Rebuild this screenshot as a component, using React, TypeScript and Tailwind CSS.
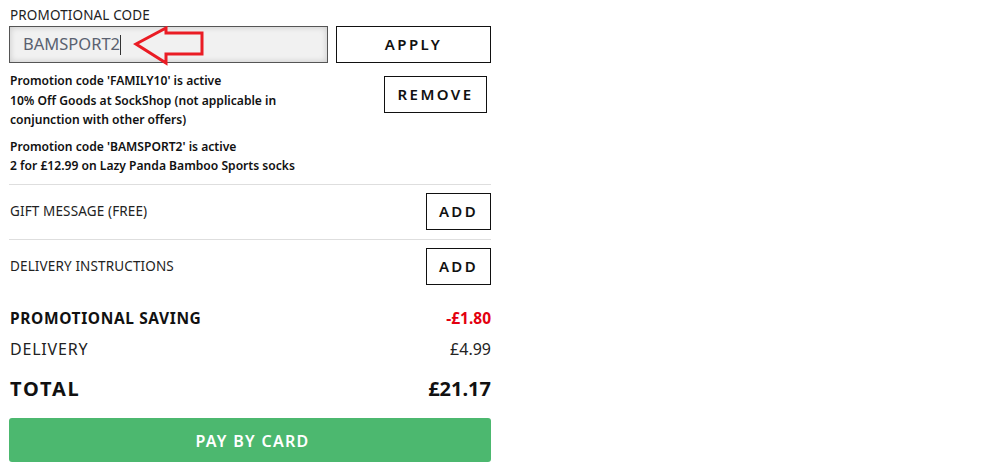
import React from "react"

const FONT = "font-['Noto_Sans',sans-serif]"

function OutlineButton({ label, className = "" }: { label: string; className?: string }) {
  return (
    <button
      className={`border border-[#111] bg-white text-[#111] text-[15px] font-semibold tracking-[0.16em] h-[37px] flex items-center justify-center ${className}`}
    >
      {label}
    </button>
  )
}

function LeftArrow() {
  return (
    <svg width="74" height="40" viewBox="0 0 74 40" className="absolute left-[121px] top-[-1px]">
      <polygon
        points="5,18 35,2 35,7 71,7 71,28 35,28 35,37"
        fill="none"
        stroke="#ea1c24"
        strokeWidth="3"
        strokeLinejoin="miter"
      />
    </svg>
  )
}

export default function App() {
  return (
    <main className={`min-h-screen bg-white ${FONT} text-[#111]`}>
      <div className="ml-[9px] w-[482px] pt-[7px]">
        {/* Promo code */}
        <div className="text-[13.5px] leading-[16px] text-[#222] pl-[1px] tracking-[0.01em]">PROMOTIONAL CODE</div>
        <div className="flex gap-[8px] mt-[3px]">
          <div className="relative w-[319px] h-[37px] border border-[#555] bg-[#f1f1f1] shadow-[inset_0_0_6px_rgba(0,0,0,0.18)] flex items-center pl-[13px]">
            <span className="text-[16.5px] text-[#5a6170]">BAMSPORT2</span>
            <span className="w-px h-[20px] bg-[#333]" />
            <LeftArrow />
          </div>
          <OutlineButton label="APPLY" className="w-[155px]" />
        </div>

        {/* Active promotions */}
        <div className="flex justify-between mt-[8px] pl-[1px]">
          <div className="text-[12.1px] font-semibold leading-[19.5px] text-[#111] w-[300px]">
            <p>Promotion code 'FAMILY10' is active</p>
            <p>10% Off Goods at SockShop (not applicable in conjunction with other offers)</p>
          </div>
          <OutlineButton label="REMOVE" className="w-[103px] mr-[4px] mt-[5px]" />
        </div>
        <div className="text-[12.1px] font-semibold leading-[19.5px] text-[#111] mt-[7px] pl-[1px]">
          <p>Promotion code 'BAMSPORT2' is active</p>
          <p>2 for £12.99 on Lazy Panda Bamboo Sports socks</p>
        </div>

        {/* Extras */}
        <div className="mt-[8px] border-t border-[#dedede] h-[55px] flex items-center justify-between">
          <span className="text-[13.5px] text-[#222] pl-[1px] tracking-[0.01em]">GIFT MESSAGE (FREE)</span>
          <OutlineButton label="ADD" className="w-[65px]" />
        </div>
        <div className="border-t border-[#dedede] h-[55px] flex items-center justify-between">
          <span className="text-[13.5px] text-[#222] pl-[1px] tracking-[0.01em]">DELIVERY INSTRUCTIONS</span>
          <OutlineButton label="ADD" className="w-[65px]" />
        </div>

        {/* Totals */}
        <div className="mt-[15px] flex justify-between items-center h-[20px] pl-[1px]">
          <span className="text-[15.5px] font-bold tracking-[0.04em]">PROMOTIONAL SAVING</span>
          <span className="text-[15.5px] font-bold text-[#e3000f]">-£1.80</span>
        </div>
        <div className="mt-[10px] flex justify-between items-center h-[20px] pl-[1px]">
          <span className="text-[16px] text-[#222] tracking-[0.05em]">DELIVERY</span>
          <span className="text-[16px] text-[#222]">£4.99</span>
        </div>
        <div className="mt-[20px] flex justify-between items-center h-[20px] pl-[1px]">
          <span className="text-[20px] font-bold tracking-[0.09em]">TOTAL</span>
          <span className="text-[20px] font-bold">£21.17</span>
        </div>

        <button className="mt-[19px] w-full h-[44px] pt-[3px] pl-[5px] rounded-[3px] bg-[#4cb86f] text-white text-[16px] font-semibold tracking-[0.08em]">
          PAY BY CARD
        </button>
      </div>
    </main>
  )
}
